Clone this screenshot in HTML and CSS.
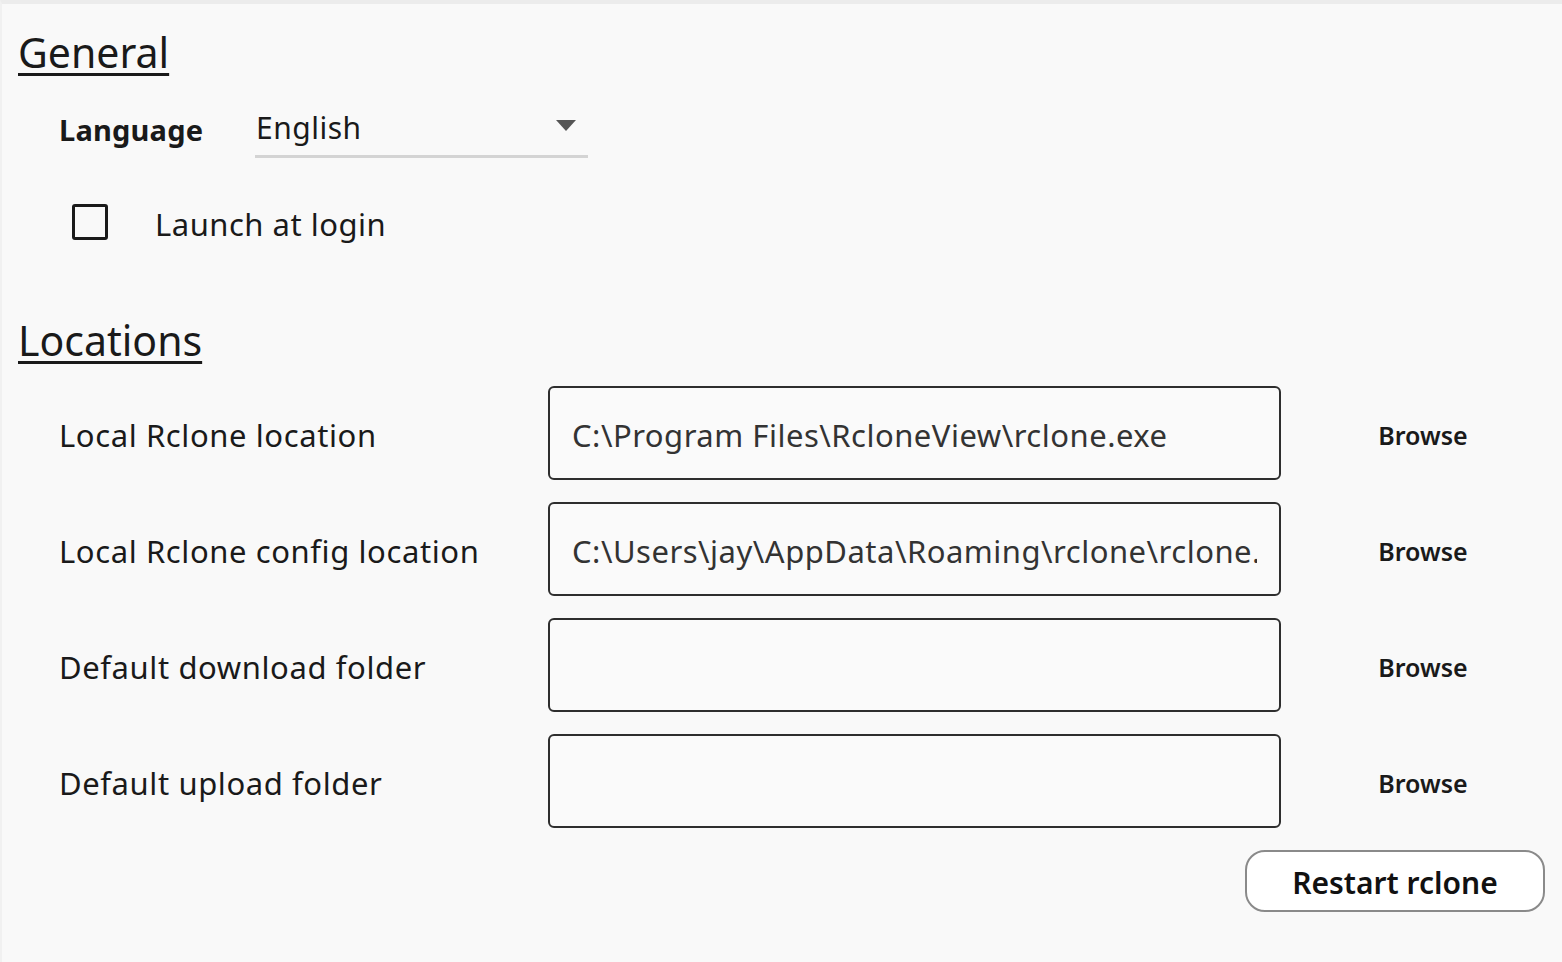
FILE: index.html
```html
<!DOCTYPE html>
<html lang="en">
<head>
<meta charset="utf-8">
<title>Settings</title>
<link rel="stylesheet" href="styles.css">
</head>
<body>
<div class="panel">
  <section class="section">
    <h2 class="section-title">General</h2>
    <div class="lang-row">
      <span class="lang-label">Language</span>
      <div class="select">
        <span class="select-value">English</span>
        <svg class="select-arrow" width="20" height="12" viewBox="0 0 20 12"><path d="M0 0 H20 L10 11 Z" fill="#555"/></svg>
      </div>
    </div>
    <label class="check-row">
      <span class="checkbox"></span>
      <span class="check-label">Launch at login</span>
    </label>
  </section>
  <section class="section locations">
    <h2 class="section-title">Locations</h2>
    <div class="loc-grid">
      <div class="loc-label">Local Rclone location</div>
      <div class="loc-input"><span class="loc-text">C:\Program Files\RcloneView\rclone.exe</span></div>
      <div class="browse">Browse</div>

      <div class="loc-label">Local Rclone config location</div>
      <div class="loc-input"><span class="loc-text">C:\Users\jay\AppData\Roaming\rclone\rclone.conf</span></div>
      <div class="browse">Browse</div>

      <div class="loc-label">Default download folder</div>
      <div class="loc-input"></div>
      <div class="browse">Browse</div>

      <div class="loc-label">Default upload folder</div>
      <div class="loc-input"></div>
      <div class="browse">Browse</div>
    </div>
    <div class="actions">
      <button class="restart">Restart rclone</button>
    </div>
  </section>
</div>
</body>
</html>
```

FILE: styles.css
```css
html, body {
  margin: 0;
  padding: 0;
  height: 100%;
}
body {
  background: #f9f9f9;
  font-family: "Noto Sans", "Open Sans", sans-serif;
  color: #1a1a1a;
  overflow: hidden;
}
.panel {
  height: 100%;
  box-sizing: border-box;
  border-top: 4px solid #ececec;
  border-left: 2px solid #f1f1f1;
  padding: 20px 17px 0 16px;
}
.section-title {
  margin: 0;
  font-weight: 400;
  font-size: 41px;
  line-height: 56px;
  text-decoration: underline;
  text-decoration-thickness: 3px;
  text-underline-offset: 5px;
  color: #1a1a1a;
}
.lang-row {
  display: flex;
  align-items: center;
  margin: 17px 0 0 41px;
  height: 64px;
}
.lang-label {
  font-weight: 700;
  font-size: 29px;
  letter-spacing: 0.2px;
  width: 196px;
}
.select {
  width: 333px;
  height: 58px;
  box-sizing: border-box;
  border-bottom: 3px solid #d4d4d4;
  display: flex;
  align-items: center;
  justify-content: space-between;
  padding: 0 12px 0 1px;
}
.select-value {
  font-size: 30px;
  letter-spacing: 0.5px;
}
.select-arrow {
  display: block;
  margin-bottom: 4px;
}
.check-row {
  display: flex;
  align-items: center;
  margin: 41px 0 0 54px;
  height: 40px;
}
.checkbox {
  width: 30px;
  height: 30px;
  border: 3px solid #1a1a1a;
  border-radius: 3px;
  margin-right: 47px;
}
.check-label {
  font-size: 31px;
  letter-spacing: 0.5px;
  padding-top: 3px;
}
.locations {
  margin-top: 70px;
}
.loc-grid {
  display: grid;
  grid-template-columns: 489px 733px 1fr;
  row-gap: 22px;
  align-items: center;
  margin: 18px 0 0 41px;
}
.loc-label {
  font-size: 31px;
  letter-spacing: 0.6px;
  padding-top: 4px;
}
.loc-input {
  height: 94px;
  box-sizing: border-box;
  border: 2px solid #2e2e2e;
  border-radius: 6px;
  background: #fafafa;
  display: flex;
  align-items: center;
  padding: 4px 22px 0;
  overflow: hidden;
}
.loc-text {
  font-size: 31px;
  letter-spacing: 0.5px;
  color: #333;
  white-space: nowrap;
  overflow: hidden;
}
.browse {
  text-align: center;
  font-size: 25px;
  font-weight: 600;
  padding-left: 20px;
  padding-top: 3px;
}
.actions {
  display: flex;
  justify-content: flex-end;
  margin-top: 22px;
}
.restart {
  width: 300px;
  height: 62px;
  border: 2px solid #8a8a8a;
  border-radius: 20px;
  background: #fff;
  font-family: "Noto Sans", "Open Sans", sans-serif;
  font-size: 30px;
  font-weight: 600;
  color: #111;
  padding: 3px 0 0;
}
```
